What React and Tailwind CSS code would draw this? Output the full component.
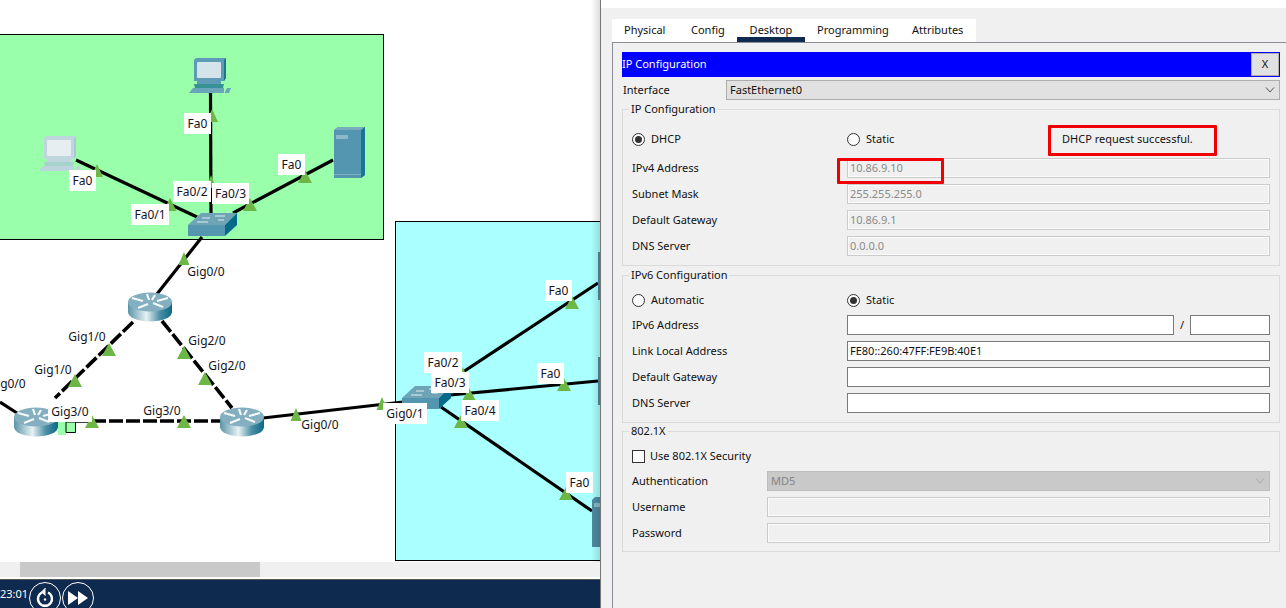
import React from "react";

const diagramLabels = [
  ["Fa0", "left-[184px] top-[113px] w-[27px] bg-white"],
  ["Fa0", "left-[69px] top-[170px] w-[27px] bg-white"],
  ["Fa0", "left-[278px] top-[154px] w-[27px] bg-white"],
  ["Fa0/2", "left-[173px] top-[181px] w-[38px] bg-white"],
  ["Fa0/3", "left-[212px] top-[183px] w-[37px] bg-white"],
  ["Fa0/1", "left-[131px] top-[204px] w-[38px] bg-white"],
  ["Gig0/0", "left-[184px] top-[261px] w-[44px]"],
  ["Gig1/0", "left-[65px] top-[326px] w-[44px]"],
  ["Gig1/0", "left-[31px] top-[359px] w-[44px]"],
  ["Gig2/0", "left-[185px] top-[330px] w-[44px]"],
  ["Gig2/0", "left-[205px] top-[355px] w-[44px]"],
  ["Gig0/0", "left-[-15px] top-[373px] w-[44px]"],
  ["Gig3/0", "left-[48px] top-[401px] w-[44px] bg-white"],
  ["Gig3/0", "left-[140px] top-[400px] w-[44px]"],
  ["Gig0/0", "left-[298px] top-[414px] w-[44px]"],
  ["Gig0/1", "left-[383px] top-[403px] w-[44px] bg-white"],
  ["Fa0/2", "left-[424px] top-[352px] w-[38px] bg-white"],
  ["Fa0/3", "left-[431px] top-[372px] w-[38px] bg-white"],
  ["Fa0/4", "left-[461px] top-[400px] w-[38px] bg-white"],
  ["Fa0", "left-[545px] top-[280px] w-[27px] bg-white"],
  ["Fa0", "left-[537px] top-[363px] w-[27px] bg-white"],
  ["Fa0", "left-[566px] top-[472px] w-[27px] bg-white"],
];

const triangles = [
  [212, 109, 12], [97, 164, 12], [170, 198, 13], [211, 175, 10], [250, 198, 14], [305, 170, 14],
  [184, 252, 11], [109, 343, 14], [75, 374, 14], [184, 346, 14], [205, 372, 14], [92, 415, 14],
  [184, 415, 14], [296, 408, 11], [382, 397, 11], [463, 367, 10], [572, 296, 14], [564, 378, 14],
  [469, 388, 14], [461, 415, 14], [566, 487, 14],
];

function Pc({ x, y, pale }) {
  const frame = pale ? "#bfd6de" : "#5d9cb4";
  const side = pale ? "#a9c8d3" : "#1f7590";
  const screen = pale ? "#e6eef2" : "#d5e3ea";
  const kb = pale ? "#bcd4dc" : "#6ba5ba";
  return (
    <g transform={`translate(${x} ${y})`}>
      <path d="M5 2 L7 0 L37 0 L37 20 L35 23 L5 23 Z" fill={frame} />
      <path d="M35 2 L37 0 L37 20 L35 23 Z" fill={side} />
      <rect x="8" y="4" width="24" height="16" rx="1" fill={screen} />
      <rect x="8" y="23" width="24" height="3" fill={frame} />
      <path d="M5 26 L35 26 L34 30 L6 30 Z" fill={side} opacity="0.8" />
      <path d="M4 30 L35 30 L35 35 L0 35 Z" fill={kb} />
      <path d="M36 34 L38 30 L42 30 L40 35 L36 35 Z" fill={kb} />
    </g>
  );
}

function Switch({ x, y }) {
  return (
    <g transform={`translate(${x} ${y})`}>
      <path d="M0 12 L13 0 L49 0 L37 12 Z" fill="#6fa3b6" />
      <rect x="0" y="12" width="37" height="11" fill="#5496b0" />
      <path d="M37 12 L49 0 L49 12 L37 23 Z" fill="#05698a" />
      <path d="M14 5 L22 5 M27 3 L37 3 M9 9 L20 9 M30 7 L36 7" stroke="#dfeef3" strokeWidth="1" />
    </g>
  );
}

function Router({ x, y }) {
  return (
    <g transform={`translate(${x} ${y})`}>
      <path d="M0 10 L0 20 A22 9.5 0 0 0 44 20 L44 10 Z" fill="url(#routerBody)" />
      <ellipse cx="22" cy="10" rx="22" ry="9.5" fill="#83afc0" />
      <path d="M4 6 L15 9 M40 6 L29 9 M10 16 L20 12 M35 15 L25 11 M19 2 L21 8 M27 3 L24 8" stroke="#f4f9fb" strokeWidth="2.2" />
    </g>
  );
}

function Diagram() {
  return (
    <svg className="absolute left-0 top-0" width="600" height="562">
      <defs>
        <linearGradient id="routerBody" x1="0" x2="1" y1="0" y2="0">
          <stop offset="0" stopColor="#5a94a7" />
          <stop offset="0.42" stopColor="#e7f1f4" />
          <stop offset="0.72" stopColor="#4c8fa5" />
          <stop offset="1" stopColor="#0b6a86" />
        </linearGradient>
      </defs>
      <g stroke="#000" strokeWidth="3.2" fill="none">
        <path d="M210.5 93 L211 217" />
        <path d="M76 160 L197 217" />
        <path d="M333 160 L233 213" />
        <path d="M202 237 L157 294" />
        <path d="M0 402 L17 413" />
        <path d="M263 418 L403 402" />
        <path d="M463 372 L598 283" />
        <path d="M450 395 L598 381" />
        <path d="M441 407 L592 511" />
        <g strokeDasharray="14 3" strokeWidth="3.6">
          <path d="M133 322 L55 398" />
          <path d="M162 321 L232 408" />
          <path d="M58 421 L220 421" />
        </g>
      </g>
      <path d="M58 422 H66 V435 H58 Z" fill="#99ffaa" />
      <path d="M66 422 H75.5 V432.5 H66 Z" fill="#99ffaa" stroke="#000" strokeWidth="1" />
      {triangles.map(([cx, top, w], i) => (
        <path key={i} d={`M${cx} ${top} L${cx + w / 2} ${top + 13} L${cx - w / 2} ${top + 13} Z`} fill="#6cb745" />
      ))}
      <Pc x={189} y={58} />
      <Pc x={39} y={136} pale />
      <g>
        <path d="M334 130 L338 127 L365 127 L365 175 L361 178 L334 178 Z" fill="#5496b0" />
        <path d="M334 130 L338 127 L365 127 L361 130 Z" fill="#79abbd" />
        <path d="M361 130 L365 127 L365 175 L361 178 Z" fill="#1a7690" />
        <rect x="336" y="135" width="12" height="4" fill="#8db8c8" />
        <rect x="334" y="174" width="27" height="1" fill="#7fb0c2" />
      </g>
      <Switch x={188} y={213} />
      <Switch x={402} y={386} />
      <Router x={128} y={292} />
      <Router x={14} y={407} />
      <Router x={220} y={407} />
      <rect x="598" y="252" width="3" height="48" fill="#4f8ba1" />
      <rect x="598" y="357" width="3" height="48" fill="#4f8ba1" />
      <path d="M592 500 L595 497 L601 497 L601 547 L592 547 Z" fill="#4f8ba1" />
      <rect x="594" y="503" width="7" height="4" fill="#8db8c8" />
    </svg>
  );
}

function Canvas() {
  return (
    <div className="relative flex-1 overflow-hidden bg-white">
      <div className="absolute left-[-2px] top-[34px] h-[206px] w-[386px] border border-black bg-[#99ffaa]" />
      <div className="absolute left-[395px] top-[221px] h-[340px] w-[220px] border border-black bg-[#aaffff]" />
      <Diagram />
      {diagramLabels.map(([text, cls], i) => (
        <div key={i} className={`absolute flex h-[21px] items-center justify-center whitespace-nowrap text-[12px] text-[#141420] ${cls}`}>
          {text}
        </div>
      ))}
      <div className="absolute right-0 top-0 h-full w-[9px] bg-gradient-to-r from-transparent to-[#00000022]" />
    </div>
  );
}

function BottomBar() {
  return (
    <div className="flex h-[29px] items-start overflow-hidden border-t border-[#555] bg-[#0f2a4f]">
      <div className="flex h-[28px] w-[28px] items-center justify-end text-[11px] text-white">
        <span className="shrink-0">23:01</span>
      </div>
      <div className="ml-[1px] mt-[2px] flex h-[32px] w-[32px] shrink-0 items-center justify-center rounded-full border border-white">
        <svg width="22" height="22" viewBox="0 0 22 22" fill="none" stroke="#fff" strokeWidth="2.4">
          <path d="M8 5.5 A7 7 0 1 0 14 5.5" />
          <path d="M11.5 1 L7.5 5 L11.5 8.5" fill="#fff" strokeWidth="1" />
          <circle cx="11" cy="12.5" r="1.2" fill="#fff" stroke="none" />
        </svg>
      </div>
      <div className="ml-[1px] mt-[2px] flex h-[32px] w-[32px] shrink-0 items-center justify-center rounded-full border border-white">
        <svg width="22" height="16" viewBox="0 0 22 16" fill="#fff">
          <path d="M1 1 L11 8 L1 15 Z" />
          <path d="M11 1 L21 8 L11 15 Z" />
        </svg>
      </div>
    </div>
  );
}

function Chevron({ color = "#555" }) {
  return (
    <svg width="10" height="6" viewBox="0 0 10 6" fill="none" stroke={color} strokeWidth="1">
      <path d="M1 0.5 L5 5 L9 0.5" />
    </svg>
  );
}

function Radio({ checked, label, className = "" }) {
  return (
    <div className={`flex items-center ${className}`}>
      <span className="flex h-[13px] w-[13px] items-center justify-center rounded-full border border-[#333] bg-white">
        {checked && <span className="h-[7px] w-[7px] rounded-full bg-[#333]" />}
      </span>
      <span className="ml-[6px]">{label}</span>
    </div>
  );
}

function DisabledInput({ value = "", className = "w-[423px]" }) {
  return (
    <div className={`flex h-[20px] items-center border border-[#cbcbcb] bg-[#f0f0f0] pl-[2px] text-[#8a8a8a] shadow-[inset_0_0_0_1px_#fafafa] ${className}`}>
      {value}
    </div>
  );
}

function EnabledInput({ value = "", className = "w-[423px]" }) {
  return (
    <div className={`flex h-[20px] items-center border border-[#7a7a7a] bg-white pl-[2px] ${className}`}>
      {value}
    </div>
  );
}

function Row({ label, children, className = "" }) {
  return (
    <div className={`flex h-[20px] items-center ${className}`}>
      <span className="w-[215px] shrink-0">{label}</span>
      {children}
    </div>
  );
}

function Group({ title, className = "", children }) {
  return (
    <fieldset className={`border border-[#dadada] pl-[9px] ${className}`}>
      <legend className="ml-[-3px] h-[16px] px-[2px] leading-[16px]">{title}</legend>
      {children}
    </fieldset>
  );
}

function Tabs() {
  return (
    <div className="ml-[11px] mt-[11px] flex h-[23px] w-[364px] bg-white">
      <div className="flex w-[67px] items-center pl-[12px]">Physical</div>
      <div className="flex w-[58px] items-center pl-[12px]">Config</div>
      <div className="flex w-[68px] items-center justify-center border-b-[5px] border-[#0f2a4f] pt-[5px]">Desktop</div>
      <div className="flex w-[95px] items-center pl-[12px]">Programming</div>
      <div className="flex w-[76px] items-center pl-[12px]">Attributes</div>
    </div>
  );
}

function Panel() {
  return (
    <div className="flex h-[608px] w-[686px] shrink-0 flex-col border-l border-[#777] bg-[#f0f0f0] font-['Noto_Sans',sans-serif] text-[11px] text-[#111]">
      <div className="h-[8px] bg-white" />
      <Tabs />
      <div className="relative ml-[11px] flex-1 border-l border-t border-[#8c8c96] pl-[9px] pr-[6px] pt-[9px]">
        <div className="flex h-[25px] items-center justify-between bg-[#0000ff] pr-[1px] text-white">
          <span className="text-[11px]">IP Configuration</span>
          <span className="flex h-[23px] w-[28px] items-center justify-center border border-[#adadad] bg-[#e1e1e1] text-[#111]">X</span>
        </div>
        <div className="mt-[3px] flex h-[20px] items-center">
          <span className="w-[104px] shrink-0 pl-[1px]">Interface</span>
          <div className="flex h-[20px] flex-1 items-center justify-between border border-[#adadad] bg-[#e1e1e1] pl-[3px] pr-[4px]">
            <span>FastEthernet0</span>
            <Chevron />
          </div>
        </div>

        <Group title="IP Configuration" className="mt-[1px] pb-[9px]">
          <div className="mt-[12px] flex h-[20px] items-center">
            <Radio checked label="DHCP" className="w-[215px]" />
            <Radio label="Static" className="w-[215px]" />
            <span>DHCP request successful.</span>
          </div>
          <div className="mt-[9px] flex flex-col gap-[6px]">
            <Row label="IPv4 Address"><DisabledInput value="10.86.9.10" /></Row>
            <Row label="Subnet Mask"><DisabledInput value="255.255.255.0" /></Row>
            <Row label="Default Gateway"><DisabledInput value="10.86.9.1" /></Row>
            <Row label="DNS Server"><DisabledInput value="0.0.0.0" /></Row>
          </div>
        </Group>

        <Group title="IPv6 Configuration" className="mt-[1px] pb-[9px]">
          <div className="mt-[7px] flex h-[20px] items-center">
            <Radio label="Automatic" className="w-[215px]" />
            <Radio checked label="Static" />
          </div>
          <div className="mt-[5px] flex flex-col gap-[6px]">
            <Row label="IPv6 Address">
              <EnabledInput className="w-[327px]" />
              <span className="w-[16px] text-center">/</span>
              <EnabledInput className="w-[80px]" />
            </Row>
            <Row label="Link Local Address"><EnabledInput value="FE80::260:47FF:FE9B:40E1" /></Row>
            <Row label="Default Gateway"><EnabledInput /></Row>
            <Row label="DNS Server"><EnabledInput /></Row>
          </div>
        </Group>

        <Group title="802.1X" className="pb-[8px]">
          <div className="mt-[7px] flex h-[20px] items-center">
            <span className="h-[13px] w-[13px] border border-[#333] bg-white" />
            <span className="ml-[5px]">Use 802.1X Security</span>
          </div>
          <div className="mt-[5px] flex flex-col gap-[6px]">
            <div className="flex h-[20px] items-center">
              <span className="w-[135px] shrink-0">Authentication</span>
              <div className="flex h-[20px] w-[503px] items-center justify-between border border-[#bdbdbd] bg-[#c9c9c9] pl-[3px] pr-[4px] text-[#858585]">
                <span>MD5</span>
                <Chevron color="#a5a5a5" />
              </div>
            </div>
            <div className="flex h-[20px] items-center">
              <span className="w-[135px] shrink-0">Username</span>
              <DisabledInput className="w-[503px]" />
            </div>
            <div className="flex h-[20px] items-center">
              <span className="w-[135px] shrink-0">Password</span>
              <DisabledInput className="w-[503px]" />
            </div>
          </div>
        </Group>

        <div className="absolute left-[435px] top-[82px] h-[31px] w-[169px] rounded-[1px] border-[3px] border-[#f00000]" />
        <div className="absolute left-[224px] top-[115px] h-[26px] w-[107px] rounded-[1px] border-[3px] border-[#f00000]" />
      </div>
    </div>
  );
}

export default function App() {
  return (
    <div className="flex h-[608px] w-[1286px] overflow-hidden bg-white font-['Noto_Sans',sans-serif]">
      <div className="flex w-[600px] shrink-0 flex-col">
        <Canvas />
        <div className="h-[15px] bg-[#f0f0f0] pl-[20px]">
          <div className="h-full w-[240px] bg-[#c9c9c9]" />
        </div>
        <div className="h-[2px] bg-white" />
        <BottomBar />
      </div>
      <Panel />
    </div>
  );
}
